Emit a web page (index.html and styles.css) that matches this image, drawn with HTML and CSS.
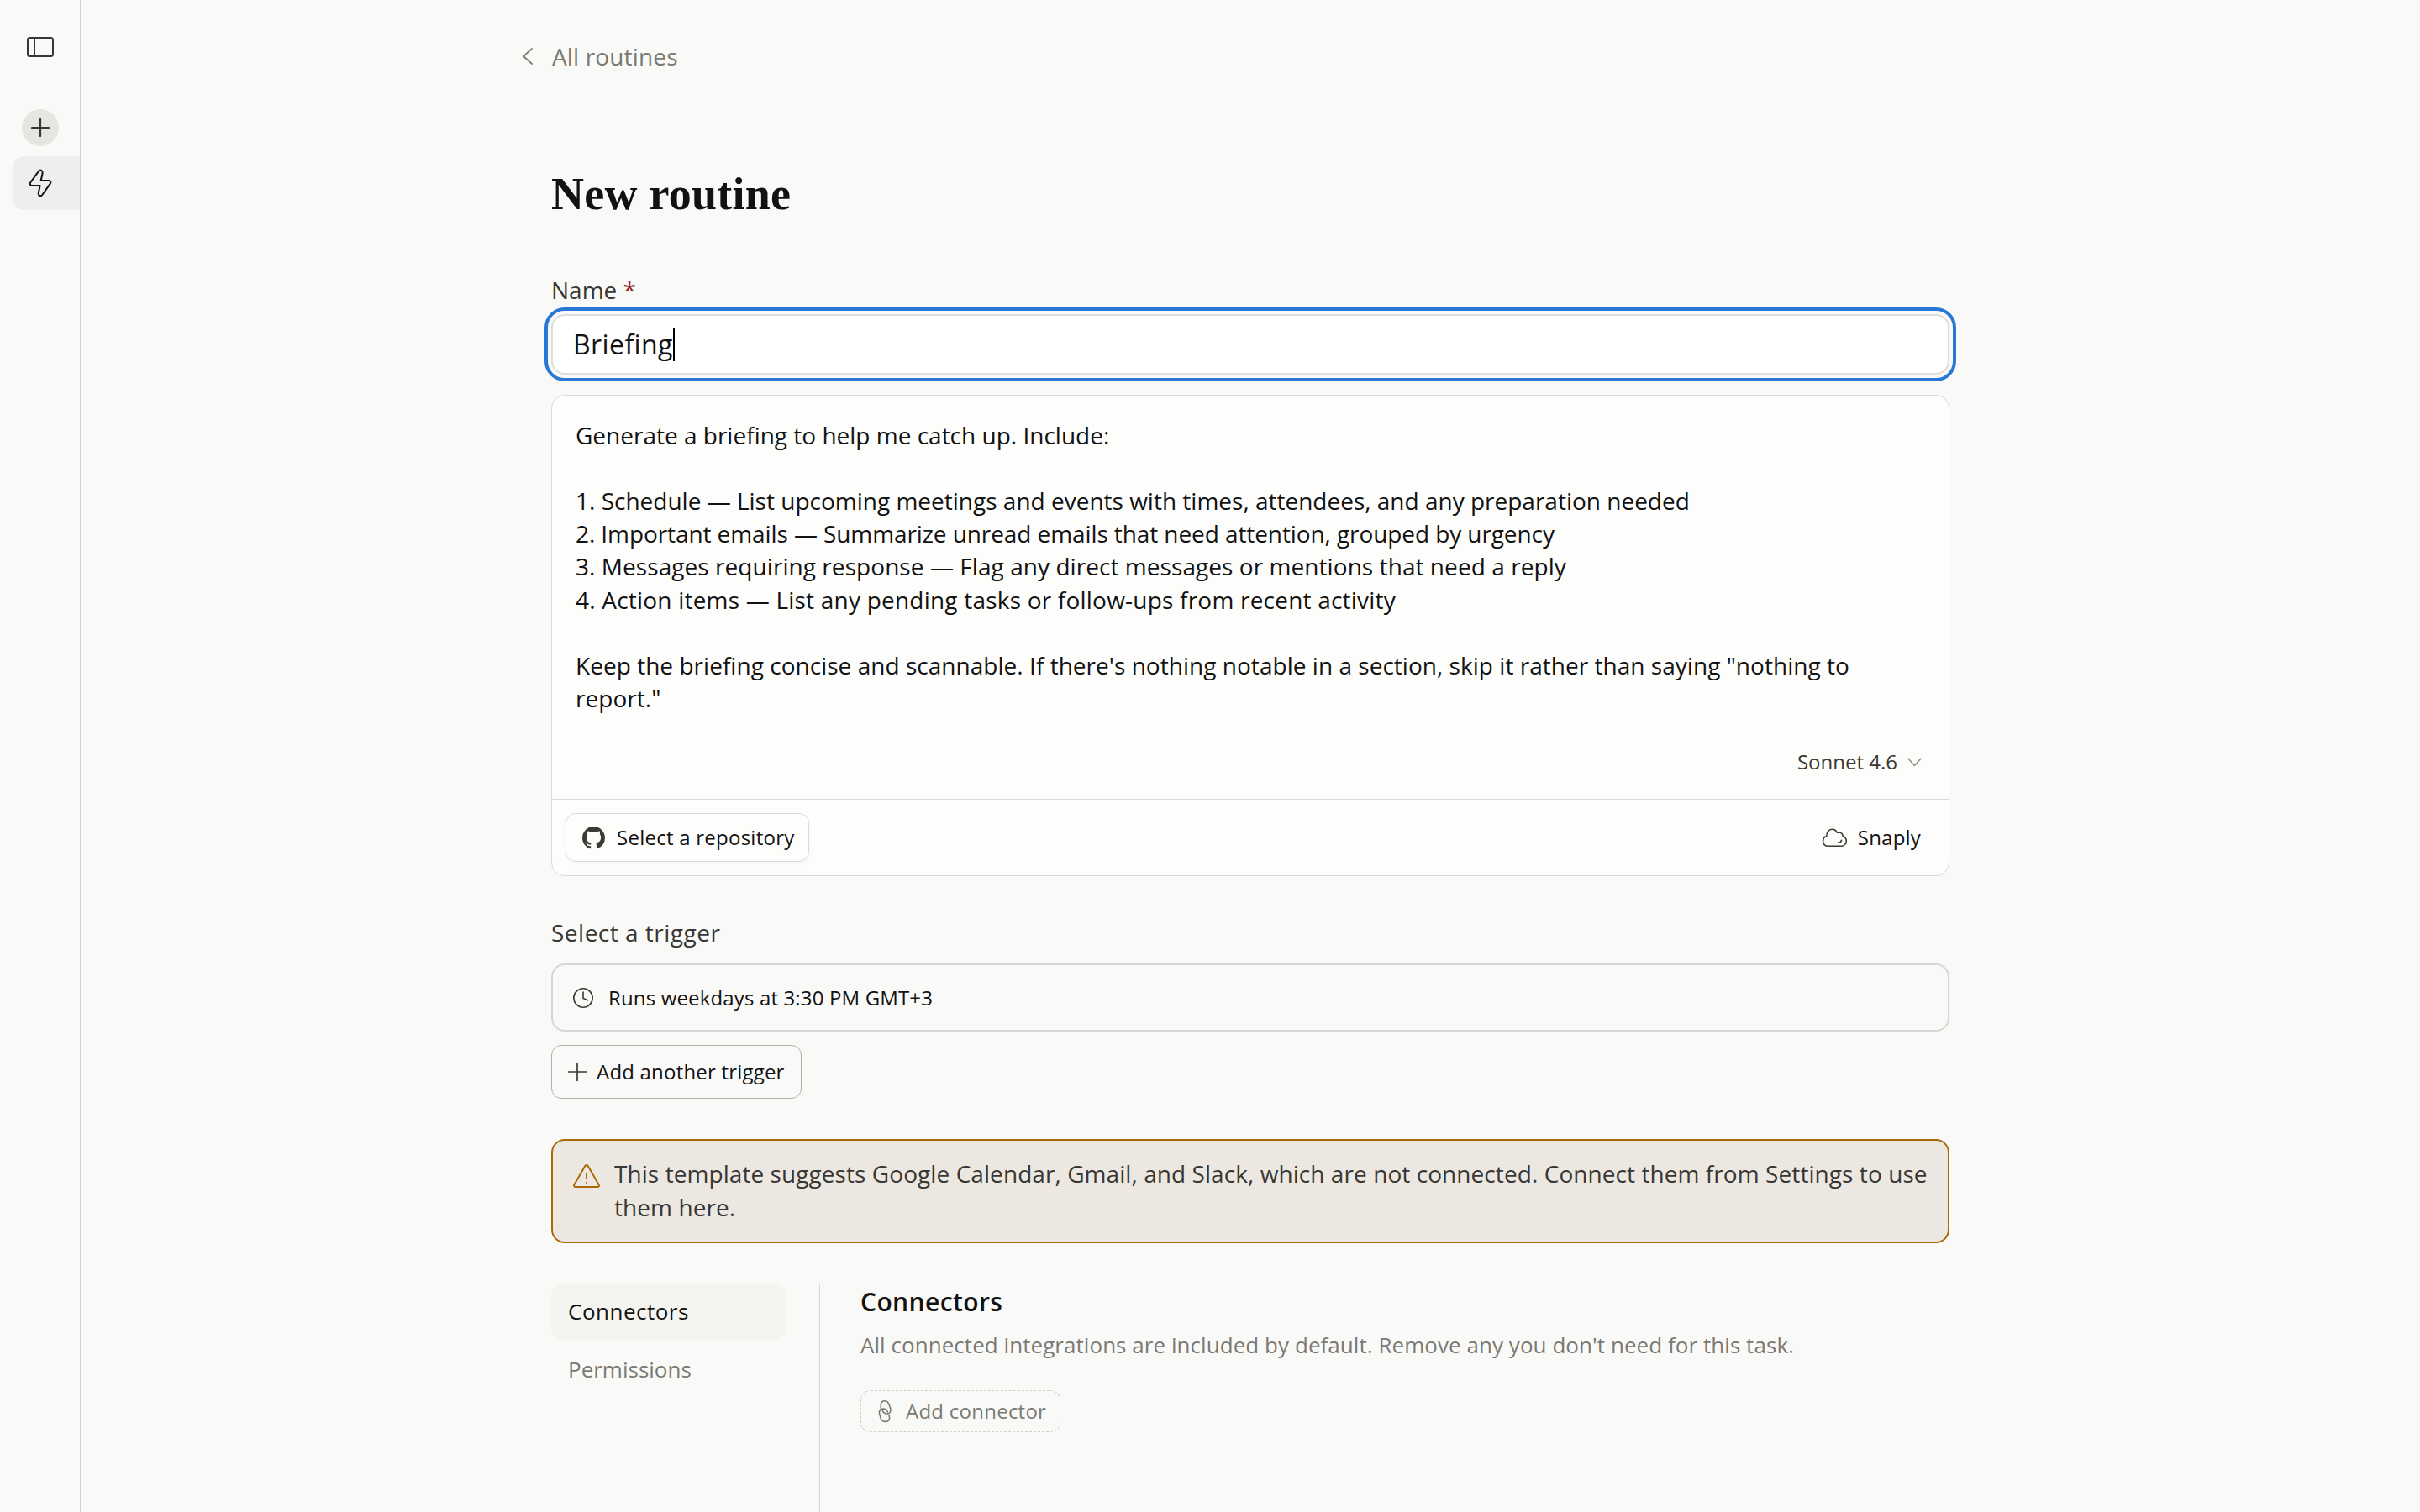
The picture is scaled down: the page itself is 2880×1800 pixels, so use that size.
FILE: index.html
```html
<!DOCTYPE html>
<html lang="en">
<head>
  <meta charset="UTF-8">
  <meta name="viewport" content="width=device-width, initial-scale=1.0">
  <title>New routine</title>
  <link rel="stylesheet" href="styles.css">
</head>
<body>
  <nav class="sidebar">
    <button class="side-btn toggle" aria-label="Toggle sidebar">
      <svg width="32" height="24" viewBox="0 0 32 24" fill="none" stroke="currentColor" stroke-width="2"><rect x="1" y="1" width="30" height="22" rx="2.5"/><path d="M9 1v22"/></svg>
    </button>
    <button class="side-btn new" aria-label="New session">
      <svg width="22" height="22" viewBox="0 0 22 22" fill="none" stroke="currentColor" stroke-width="2.2" stroke-linecap="round"><path d="M11 1v20M1 11h20"/></svg>
    </button>
    <button class="side-btn active" aria-label="Routines">
      <svg width="32" height="40" viewBox="0 0 32 40" fill="none" stroke="currentColor" stroke-width="2" stroke-linejoin="round"><path d="M14 5.800 4.400 19C3 21 4 23 6 23h9.600l-1.800 9c-.4 3 2.700 4.300 4.500 2l9.500-13.400c1.400-1.800.4-3.600-1.600-3.600h-9.500l1.900-8.800C19 5 16 3.500 14 5.800Z"/></svg>
    </button>
  </nav>

  <main class="content">
    <a class="back">
      <svg width="12" height="20" viewBox="0 0 12 20" fill="none" stroke="currentColor" stroke-width="1.7" stroke-linecap="round" stroke-linejoin="round"><path d="M11 1 1 10l10 9"/></svg>
      <span>All routines</span>
    </a>

    <h1>New routine</h1>

    <label class="label">Name <span class="required">*</span></label>
    <div class="name-input"><span>Briefing</span><i class="caret"></i></div>

    <section class="prompt">
      <div class="prompt-text">
        <p>Generate a briefing to help me catch up. Include:</p>
        <ol>
          <li>1. Schedule — List upcoming meetings and events with times, attendees, and any preparation needed</li>
          <li class="tight">2. Important emails — Summarize unread emails that need attention, grouped by urgency</li>
          <li class="loose">3. Messages requiring response — Flag any direct messages or mentions that need a reply</li>
          <li class="looser">4. Action items — List any pending tasks or follow-ups from recent activity</li>
        </ol>
        <p class="closing">Keep the briefing concise and scannable. If there's nothing notable in a section, skip it rather than saying "nothing to<br>report."</p>
      </div>
      <div class="model">
        <span>Sonnet 4.6</span>
        <svg width="17" height="11" viewBox="0 0 17 11" fill="none" stroke="currentColor" stroke-width="1.4" stroke-linecap="round" stroke-linejoin="round"><path d="m1 1 7.500 8.500L16 1"/></svg>
      </div>
      <footer class="prompt-footer">
        <button class="repo">
          <svg width="27" height="27" viewBox="0 0 16 16" fill="#3a3a37"><path d="M8 0C3.58 0 0 3.58 0 8c0 3.54 2.29 6.53 5.47 7.59.4.07.55-.17.55-.38 0-.19-.01-.82-.01-1.49-2.01.37-2.53-.49-2.69-.94-.09-.23-.48-.94-.82-1.13-.28-.15-.68-.52-.01-.53.63-.01 1.08.58 1.23.82.72 1.21 1.87.87 2.33.66.07-.52.28-.87.51-1.07-1.78-.2-3.64-.89-3.64-3.95 0-.87.31-1.59.82-2.15-.08-.2-.36-1.02.08-2.12 0 0 .67-.21 2.2.82.64-.18 1.32-.27 2-.27s1.36.09 2 .27c1.53-1.04 2.2-.82 2.2-.82.44 1.1.16 1.92.08 2.12.51.56.82 1.27.82 2.15 0 3.07-1.87 3.75-3.65 3.95.29.25.54.73.54 1.48 0 1.07-.01 1.93-.01 2.2 0 .21.15.46.55.38A8.01 8.01 0 0 0 16 8c0-4.42-3.58-8-8-8Z"/></svg>
          <span>Select a repository</span>
        </button>
        <div class="env">
          <svg width="38" height="30" viewBox="0 0 38 30" fill="none" stroke="#3a3a37" stroke-width="1.6" stroke-linecap="round" stroke-linejoin="round"><path d="M11.300 25.300a6 6 0 0 1-1.500-11.700c-.3-4.800 2.700-8.300 6.500-8.300 2.700 0 4.900 1.400 6 4 3.300-1.300 6.700.9 6.900 4.100 2.800 1 4.100 3.200 4.100 5.800a6 6 0 0 1-6 6.100Z"/><path d="M27.600 18.200c-.3 2-2 3.200-4.400 3"/></svg>
          <span>Snaply</span>
        </div>
      </footer>
    </section>

    <h2 class="label trigger-label">Select a trigger</h2>
    <div class="trigger">
      <svg width="24" height="24" viewBox="0 0 24 24" fill="none" stroke="#3a3a37" stroke-width="1.6" stroke-linecap="round"><circle cx="12" cy="12" r="11.2"/><path d="M12 5v7.500l5.500 2.300"/></svg>
      <span>Runs weekdays at 3:30 PM GMT+3</span>
    </div>
    <button class="add-trigger">
      <svg width="22" height="22" viewBox="0 0 22 22" fill="none" stroke="#3a3a37" stroke-width="1.7" stroke-linecap="round"><path d="M11 0v22M0 11h22"/></svg>
      <span>Add another trigger</span>
    </button>

    <div class="warning">
      <svg width="32" height="28" viewBox="0 0 32 28" fill="none" stroke="currentColor" stroke-width="2" stroke-linecap="round" stroke-linejoin="round"><path d="M14.300 2 1.300 24.400c-.7 1.300 0 2.500 1.500 2.500h26.400c1.500 0 2.200-1.200 1.500-2.500L17.700 2c-.8-1.300-2.600-1.300-3.400 0Z"/><path d="M16 11.200v6.100M16 21.700v.3"/></svg>
      <p>This template suggests Google Calendar, Gmail, and Slack, which are not connected. Connect them from Settings to use<br>them here.</p>
    </div>

    <section class="settings">
      <div class="tabs">
        <a class="tab selected">Connectors</a>
        <a class="tab">Permissions</a>
      </div>
      <div class="panel">
        <h3>Connectors</h3>
        <p>All connected integrations are included by default. Remove any you don't need for this task.</p>
        <button class="add-connector">
          <svg width="18" height="30" viewBox="0 0 18 30" fill="none" stroke="currentColor" stroke-width="1.6" stroke-linecap="round"><path d="M4.300 11V7c.2-3 2.200-4.300 4.700-4.300 2.300 0 3.800 1.300 4.600 3.300l2.100 5.500c1 3.500-.7 6.500-3.700 6.500-2.500 0-5-1.500-5.800-3.800"/><path d="m14 19.500.6 3.500c0 3-2.300 4.400-4.900 4.400-2.700 0-4.700-1.400-5.500-3.900L2.600 18c-.6-3.500.9-5.700 3.600-5.900 2.800-.1 5.100 1.100 6.100 3.700"/></svg>
          <span>Add connector</span>
        </button>
      </div>
    </section>
  </main>
</body>
</html>
```
FILE: styles.css
```css
* {
  box-sizing: border-box;
}

body {
  display: flex;
  height: 1800px;
  margin: 0;
  overflow: hidden;
  background: #f9f9f7;
  color: #121212;
  font-family: "Open Sans", sans-serif;
  font-size: 28px;
  line-height: 40px;
}

h1, h2, h3, p {
  margin: 0;
}

button {
  display: flex;
  align-items: center;
  padding: 0;
  border: none;
  background: none;
  color: inherit;
  font: inherit;
}

svg {
  flex: none;
}

/* sidebar */
.sidebar {
  display: flex;
  flex-direction: column;
  align-items: center;
  width: 96px;
  flex: none;
  padding-top: 44px;
  border-right: 1px solid #cfcfcd;
}

.side-btn {
  justify-content: center;
  color: #363634;
}

.new {
  width: 44px;
  height: 44px;
  margin: 62px 0 12px;
  border-radius: 50%;
  background: #e5e6e1;
}

.active {
  align-self: flex-end;
  justify-content: flex-start;
  width: 79px;
  height: 64px;
  padding-left: 16px;
  border-radius: 12px 0 0 12px;
  background: #efeeec;
  color: #121212;
}

/* main column */
.content {
  display: flex;
  flex-direction: column;
  width: 1664px;
  margin-left: 560px;
  padding-top: 47px;
  white-space: nowrap;
}

.back {
  display: flex;
  align-items: center;
  gap: 23px;
  margin-left: -34px;
  color: #7b7974;
  letter-spacing: 0.15px;
}

h1 {
  margin-top: 112px;
  font: bold 54px/64px "Liberation Serif", serif;
  letter-spacing: 0.25px;
}

.label {
  margin-top: 62px;
  color: #373734;
  font-size: 28px;
  font-weight: 400;
}

.required {
  color: #8e2323;
}

.name-input {
  display: flex;
  align-items: center;
  height: 72px;
  margin-top: 9px;
  padding-left: 24px;
  border: 2px solid #dededc;
  border-radius: 16px;
  outline: 4px solid #2a78d6;
  outline-offset: 4px;
  background: #fff;
  font-size: 32px;
  letter-spacing: 0.4px;
}

.caret {
  width: 2px;
  height: 40px;
  background: #000;
}

/* prompt card */
.prompt {
  display: flex;
  flex-direction: column;
  height: 573px;
  margin-top: 24px;
  border: 1px solid #dadad8;
  border-radius: 16px;
  background: #fdfdfc;
}

.prompt-text {
  flex: 1;
  padding: 27.5px 28px 0;
  line-height: 39.2px;
}

.prompt-text ol {
  margin: 39.2px 0;
  padding: 0;
  list-style: none;
}

.tight {
  letter-spacing: -0.09px;
}

.loose {
  letter-spacing: 0.06px;
}

.looser {
  letter-spacing: 0.21px;
}

.closing {
  letter-spacing: 0.03px;
}

.model {
  display: flex;
  align-items: center;
  justify-content: flex-end;
  gap: 12px;
  height: 36px;
  margin-bottom: 26px;
  padding-right: 32px;
  color: #373734;
  font-size: 24px;
}

.model svg {
  color: #8a8984;
}

.prompt-footer {
  display: flex;
  align-items: center;
  justify-content: space-between;
  height: 91px;
  padding: 0 33px 0 16px;
  border-top: 1px solid #dadad8;
  font-size: 24px;
}

.repo {
  gap: 14px;
  width: 290px;
  height: 58px;
  padding-left: 19px;
  border: 1px solid #dadad8;
  border-radius: 12px;
  box-shadow: 0 2px 4px rgba(0, 0, 0, 0.04);
  letter-spacing: 0.25px;
}

.env {
  display: flex;
  align-items: center;
  gap: 9px;
  letter-spacing: 0.2px;
}

/* trigger */
.trigger-label {
  margin-top: 47px;
  font-weight: 500;
  letter-spacing: 0.5px;
}

.trigger {
  display: flex;
  align-items: center;
  gap: 18px;
  height: 81px;
  margin-top: 17px;
  padding: 0 24px;
  border: 2px solid #d6d6d4;
  border-radius: 16px;
  font-size: 24px;
  font-weight: 500;
  letter-spacing: 0.15px;
}

.add-trigger {
  gap: 12px;
  width: 298px;
  height: 64px;
  margin-top: 16px;
  padding-left: 19px;
  border: 1px solid #b0b0ad;
  border-radius: 12px;
  font-size: 24px;
  font-weight: 500;
  letter-spacing: 0.2px;
}

/* warning */
.warning {
  display: flex;
  gap: 17px;
  height: 124px;
  margin-top: 48px;
  padding: 19px 24px;
  border: 2px solid #a86b08;
  border-radius: 16px;
  background: #ece7e0;
  color: #a86b08;
}

.warning svg {
  margin-top: 9px;
}

.warning p {
  color: #373734;
  letter-spacing: 0.07px;
}

/* connectors / permissions */
.settings {
  display: flex;
  height: 272px;
  margin-top: 48px;
}

.tabs {
  display: flex;
  flex-direction: column;
  gap: 2px;
  width: 279px;
}

.tab {
  height: 67px;
  padding-left: 20px;
  border-radius: 12px;
  color: #7b7974;
  font-size: 26px;
  line-height: 66px;
}

.selected {
  background: #f4f4f0;
  color: #121212;
  letter-spacing: 0.5px;
}

.panel {
  flex: 1;
  margin-left: 40px;
  padding: 2px 0 0 48px;
  border-left: 1px solid #d6d6d4;
}

.panel h3 {
  font-size: 30px;
  font-weight: 650;
  letter-spacing: 0.4px;
}

.panel p {
  margin-top: 13px;
  color: #7b7974;
  font-size: 26px;
  line-height: 36px;
  letter-spacing: 0.05px;
}

.add-connector {
  gap: 16px;
  width: 238px;
  height: 50px;
  margin-top: 36px;
  padding-left: 19px;
  border: 1px dashed #d0d0cd;
  border-radius: 12px;
  color: #7b7974;
  font-size: 24px;
  letter-spacing: 0.25px;
}
```
